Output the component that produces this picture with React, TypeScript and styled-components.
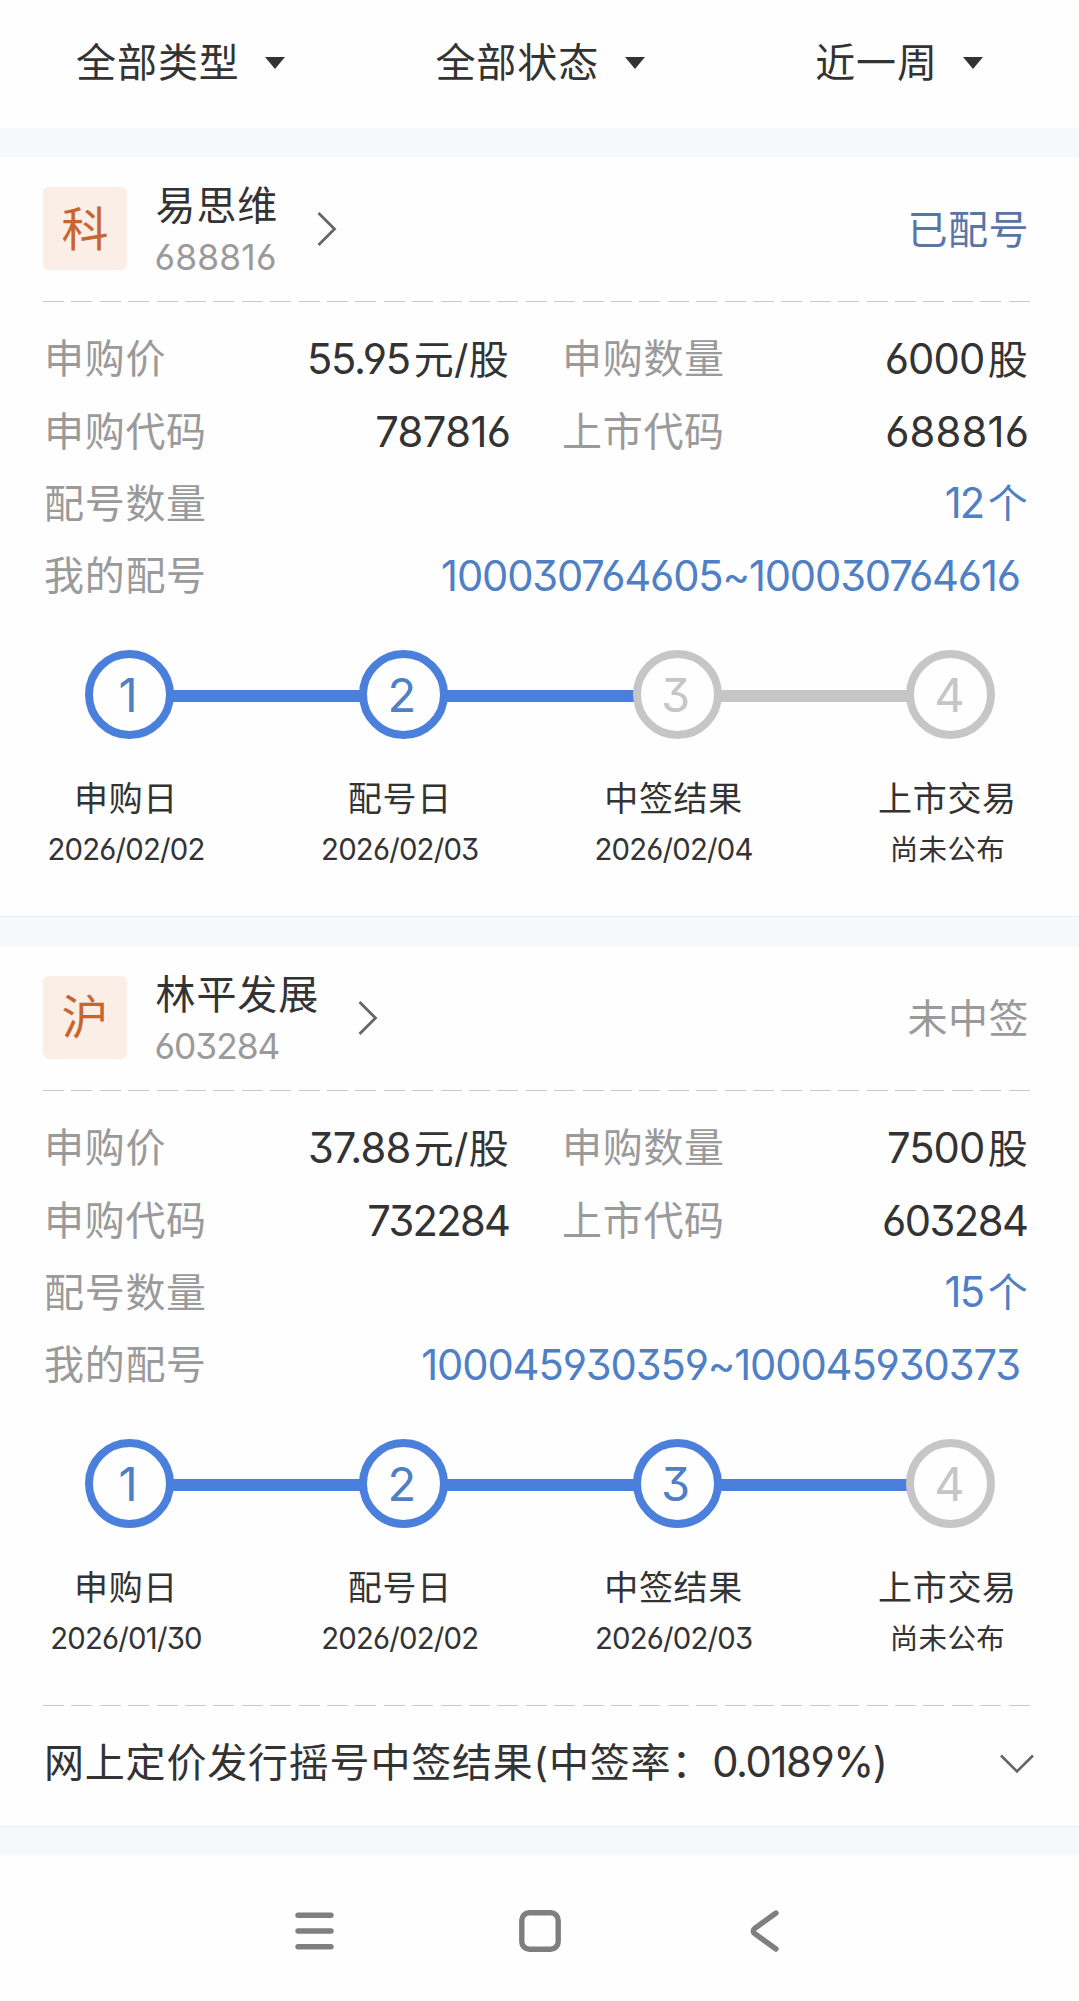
import React from "react";
import styled, { createGlobalStyle } from "styled-components";

const GlobalStyle = createGlobalStyle`
  * { box-sizing: border-box; }
  body {
    margin: 0;
    background: #fefefe;
    color: #333;
    font-family: Inter, "Noto Sans CJK SC", sans-serif;
    font-feature-settings: "cv03", "cv04", "cv09";
    font-size: 41px;
    line-height: 60px;
  }
`;

const BLUE = "#4a7fdb";
const BLUE_TEXT = "#4f7fc4";
const GREY = "#c6c6c6";

const Page = styled.main`
  width: 1079px;
  height: 2001px;
  display: flex;
  flex-direction: column;
  overflow: hidden;
  background: #fefefe;
`;

const FilterBar = styled.nav`
  display: grid;
  grid-template-columns: repeat(3, 1fr);
  height: 128px;
  padding: 0 0 3px 1px;
`;

const Filter = styled.div`
  display: flex;
  align-items: center;
  justify-content: center;
  gap: 25.5px;
  font-size: 40px;
  letter-spacing: 0.9px;
`;

const Triangle = styled.span`
  width: 0;
  height: 0;
  margin-top: 1px;
  border: 10px solid transparent;
  border-top: 12px solid #333;
  border-bottom: 0;
`;

const Gap = styled.div<{ $height: number; $line?: boolean }>`
  flex: none;
  height: ${(p) => p.$height}px;
  background: #f7f8fa;
  border-top: ${(p) => (p.$line ? "1px solid #ebecee" : "none")};
`;

const Card = styled.section`
  flex: none;
  padding: 0 49px 0 43px;
`;

const CardHeader = styled.header`
  display: flex;
  align-items: center;
  height: 144px;
`;

const Badge = styled.span`
  display: flex;
  align-items: center;
  justify-content: center;
  width: 84px;
  height: 83px;
  margin-top: -1px;
  border-radius: 6px;
  background: #faeee6;
  color: #c7652f;
  font-size: 47px;
`;

const Title = styled.div`
  padding-top: 6px;
  margin-left: 28.5px;
  line-height: 52px;
`;

const Name = styled.div`
  font-size: 40px;
  letter-spacing: 0.9px;
`;

const Code = styled.div<{ $spacing: number }>`
  margin-left: -1px;
  font-size: 35.3px;
  color: #9a9a9a;
  letter-spacing: ${(p) => p.$spacing}px;
`;

const Arrow = styled.svg`
  display: block;
  margin-left: 39px;
  fill: none;
  stroke: #666;
  stroke-width: 2.8;
`;

const Status = styled.span<{ $active: boolean }>`
  margin-left: auto;
  margin-right: 1px;
  padding-top: 2px;
  font-size: 40px;
  letter-spacing: 0.5px;
  color: ${(p) => (p.$active ? "#5875a6" : "#9a9a9a")};
`;

const Dashes = styled.div`
  height: 1px;
  width: 987px;
  background: repeating-linear-gradient(to right, #c8c8c8 0 21px, transparent 21px 28.4px);
`;

const Details = styled.div`
  display: grid;
  grid-template-columns: 468px 1fr;
  column-gap: 50px;
  grid-auto-rows: 72.4px;
  padding-top: 21px;
`;

const Row = styled.div<{ $wide?: boolean }>`
  grid-column: ${(p) => (p.$wide ? "1 / -1" : "auto")};
  display: flex;
  align-items: center;
  justify-content: space-between;
  white-space: nowrap;
`;

const Label = styled.span`
  padding-left: 1px;
  font-size: 40px;
  letter-spacing: 0.7px;
  color: #9a9a9a;
`;

const Value = styled.span<{ $link?: boolean; $inset?: number }>`
  display: flex;
  align-items: baseline;
  gap: 2.5px;
  margin-right: ${(p) => p.$inset ?? 2}px;
  color: ${(p) => (p.$link ? BLUE_TEXT : "#333")};
`;

const Digits = styled.span<{ $spacing: number }>`
  font-size: 41.7px;
  letter-spacing: ${(p) => p.$spacing}px;
  margin-right: ${(p) => -p.$spacing}px;
`;

const Unit = styled.span`
  font-size: 40px;
  letter-spacing: 0.3px;
`;

const Track = styled.div`
  display: flex;
  align-items: center;
  width: 910.4px;
  margin: 37px 0 0 42px;
`;

const Circle = styled.span<{ $on: boolean }>`
  flex: none;
  display: flex;
  align-items: center;
  justify-content: center;
  width: 89px;
  height: 89px;
  padding: 2px 3px 0 0;
  border: 8.5px solid ${(p) => (p.$on ? BLUE : GREY)};
  border-radius: 50%;
  font-size: 47px;
  color: ${(p) => (p.$on ? BLUE_TEXT : GREY)};
`;

const Connector = styled.span<{ $on: boolean }>`
  flex: 1;
  height: 12px;
  margin: 3px -1px 0;
  background: ${(p) => (p.$on ? BLUE : GREY)};
`;

const Captions = styled.div`
  display: grid;
  grid-template-columns: repeat(4, 200px);
  column-gap: 73.8px;
  margin: 35px 0 0 -17px;
  height: 142.4px;
  text-align: center;
  line-height: 50px;
  white-space: nowrap;
`;

const StepName = styled.div`
  font-size: 34px;
  letter-spacing: 0.7px;
`;

const StepDate = styled.div<{ $text?: boolean }>`
  padding-top: 1px;
  font-size: ${(p) => (p.$text ? 28.5 : 29.3)}px;
  letter-spacing: ${(p) => (p.$text ? 0.3 : -0.8)}px;
`;

const Footer = styled.footer`
  display: flex;
  align-items: center;
  justify-content: space-between;
  height: 120px;
  padding-bottom: 6px;
  font-size: 40px;
  letter-spacing: 0.8px;
  white-space: nowrap;
`;

const FooterText = styled.span`
  display: flex;
  align-items: baseline;
  padding-left: 1px;
`;

const Toggle = styled.svg`
  display: block;
  margin: 2px -4px 0 0;
  fill: none;
  stroke: #666;
  stroke-width: 2.6;
`;

const SystemBar = styled.nav`
  flex: 1;
  display: flex;
  justify-content: center;
  align-items: center;
  gap: 182.5px;
  padding-top: 7px;
`;

const SystemIcon = styled.svg`
  display: block;
  fill: none;
  stroke: #7f7f7f;
  stroke-width: 5.4;
  stroke-linecap: round;
  stroke-linejoin: round;
`;

type Stock = {
  badge: string;
  name: string;
  code: string;
  codeSpacing: number;
  status: string;
  active: boolean;
  price: [string, number];
  amount: [string, number];
  buyCode: [string, number];
  listCode: [string, number];
  count: [string, number];
  range: [string, number];
  dates: string[];
  done: number;
  result?: boolean;
};

const stocks: Stock[] = [
  {
    badge: "科",
    name: "易思维",
    code: "688816",
    codeSpacing: 0.2,
    status: "已配号",
    active: true,
    price: ["55.95", -1.2],
    amount: ["6000", -0.9],
    buyCode: ["787816", -0.6],
    listCode: ["688816", 0.2],
    count: ["12", -2],
    range: ["100030764605~100030764616", -1.15],
    dates: ["2026/02/02", "2026/02/03", "2026/02/04", "尚未公布"],
    done: 2,
  },
  {
    badge: "沪",
    name: "林平发展",
    code: "603284",
    codeSpacing: -1,
    status: "未中签",
    active: false,
    price: ["37.88", -0.9],
    amount: ["7500", -1],
    buyCode: ["732284", -1.7],
    listCode: ["603284", -1.5],
    count: ["15", -1.5],
    range: ["100045930359~100045930373", -1.12],
    dates: ["2026/01/30", "2026/02/02", "2026/02/03", "尚未公布"],
    done: 3,
    result: true,
  },
];

const stepNames = ["申购日", "配号日", "中签结果", "上市交易"];

type FieldProps = {
  label: string;
  value: [string, number];
  unit?: string;
  wide?: boolean;
  link?: boolean;
  inset?: number;
};

const Field = ({ label, value, unit, wide, link, inset }: FieldProps) => (
  <Row $wide={wide}>
    <Label>{label}</Label>
    <Value $link={link} $inset={inset}>
      <Digits $spacing={value[1]}>{value[0]}</Digits>
      {unit && <Unit>{unit}</Unit>}
    </Value>
  </Row>
);

const StockCard = ({ stock }: { stock: Stock }) => (
  <Card>
    <CardHeader>
      <Badge>{stock.badge}</Badge>
      <Title>
        <Name>{stock.name}</Name>
        <Code $spacing={stock.codeSpacing}>{stock.code}</Code>
      </Title>
      <Arrow width="20" height="34" viewBox="0 0 20 34">
        <path d="M1.5 1 17.5 17 1.5 33" />
      </Arrow>
      <Status $active={stock.active}>{stock.status}</Status>
    </CardHeader>
    <Dashes />
    <Details>
      <Field label="申购价" value={stock.price} unit="元/股" />
      <Field label="申购数量" value={stock.amount} unit="股" />
      <Field label="申购代码" value={stock.buyCode} inset={0} />
      <Field label="上市代码" value={stock.listCode} inset={1} />
      <Field label="配号数量" value={stock.count} unit="个" wide link />
      <Field label="我的配号" value={stock.range} wide link inset={9} />
    </Details>
    <Track>
      {stepNames.map((name, i) => (
        <React.Fragment key={name}>
          {i > 0 && <Connector $on={i <= stock.done} />}
          <Circle $on={i < stock.done}>{i + 1}</Circle>
        </React.Fragment>
      ))}
    </Track>
    <Captions>
      {stepNames.map((name, i) => (
        <div key={name}>
          <StepName>{name}</StepName>
          <StepDate $text={i === 3}>{stock.dates[i]}</StepDate>
        </div>
      ))}
    </Captions>
    {stock.result && (
      <>
        <Dashes />
        <Footer>
          <FooterText>
            <span>网上定价发行摇号中签结果(中签率：</span>
            <Digits $spacing={-1.4}>0.0189%)</Digits>
          </FooterText>
          <Toggle width="34" height="20" viewBox="0 0 34 20">
            <path d="M1 1.5 17 17.5 33 1.5" />
          </Toggle>
        </Footer>
      </>
    )}
  </Card>
);

export default function App() {
  return (
    <Page>
      <GlobalStyle />
      <FilterBar>
        {["全部类型", "全部状态", "近一周"].map((text) => (
          <Filter key={text}>
            {text}
            <Triangle />
          </Filter>
        ))}
      </FilterBar>
      <Gap $height={29} />
      {stocks.map((stock) => (
        <React.Fragment key={stock.code}>
          <StockCard stock={stock} />
          <Gap $height={stock.result ? 29 : 30} $line />
        </React.Fragment>
      ))}
      <SystemBar>
        <SystemIcon width="42" height="42" viewBox="0 0 42 42">
          <path d="M4 5.2H37M4 21H37M4 36.8H37" />
        </SystemIcon>
        <SystemIcon width="42" height="42" viewBox="0 0 42 42">
          <rect x="2.8" y="2.8" width="36.4" height="36.4" rx="7.5" />
        </SystemIcon>
        <SystemIcon width="42" height="42" viewBox="0 0 42 42">
          <path d="M33 3 12 18.2Q8.4 21 12 23.8L33 39" />
        </SystemIcon>
      </SystemBar>
    </Page>
  );
}
